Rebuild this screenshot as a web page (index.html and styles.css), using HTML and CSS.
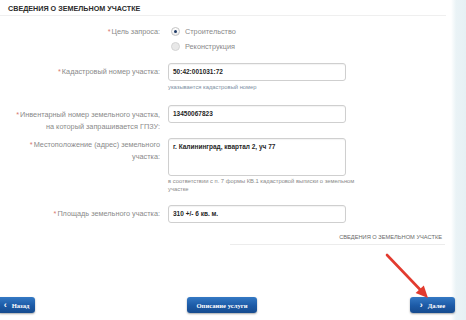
FILE: index.html
```html
<!DOCTYPE html>
<html lang="ru">
<head>
<meta charset="utf-8">
<link rel="stylesheet" href="styles.css">
</head>
<body>
<div class="page">
  <h1 class="title">Сведения о земельном участке</h1>
  <div class="form">
    <div class="row row-radio">
      <div class="lbl"><span class="req">*</span>Цель запроса:</div>
      <div class="field radios">
        <div class="opt"><span class="radio on"></span>Строительство</div>
        <div class="opt"><span class="radio"></span>Реконструкция</div>
      </div>
    </div>
    <div class="row row-kad">
      <div class="lbl"><span class="req">*</span>Кадастровый номер участка:</div>
      <div class="field">
        <div class="input">50:42:001031:72</div>
        <div class="hint">указывается кадастровый номер</div>
      </div>
    </div>
    <div class="row row-inv">
      <div class="lbl lbl-multi"><span class="req">*</span>Инвентарный номер земельного участка,<br>на который запрашивается ГПЗУ:</div>
      <div class="field">
        <div class="input">13450067823</div>
      </div>
    </div>
    <div class="row row-addr">
      <div class="lbl lbl-multi lbl-addr"><span class="req">*</span>Местоположение (адрес) земельного<br>участка:</div>
      <div class="field">
        <div class="input textarea">г. Калининград, квартал 2, уч 77</div>
        <div class="hint hint-wide">в соответствии с п. 7 формы КВ.1 кадастровой выписки о земельном участке</div>
      </div>
    </div>
    <div class="row row-area">
      <div class="lbl"><span class="req">*</span>Площадь земельного участка:</div>
      <div class="field">
        <div class="input">310 +/- 6 кв. м.</div>
      </div>
    </div>
  </div>
  <div class="section-foot">Сведения о земельном участке</div>
  <div class="buttons">
    <a class="btn btn-back"><span class="chev">‹</span>Назад</a>
    <a class="btn btn-desc">Описание услуги</a>
    <a class="btn btn-next"><span class="chev">›</span>Далее</a>
  </div>
  <svg class="arrow" width="466" height="320" viewBox="0 0 466 320">
    <line x1="387" y1="255" x2="420" y2="289.5" stroke="#e23b2f" stroke-width="2.6" stroke-linecap="round"/>
    <polygon points="428,298 415.6,292.9 423.8,285.4" fill="#e23b2f"/>
  </svg>
</div>
</body>
</html>
```
FILE: styles.css
```css
html, body {
  margin: 0;
  padding: 0;
}
body {
  width: 466px;
  height: 320px;
  overflow: hidden;
  background: linear-gradient(to right, #ffffff 0, #ffffff 451px, #eaf3f6 456px, #e6f0f4 466px);
  font-family: "Liberation Sans", Arial, sans-serif;
  color: #888;
}
.page {
  position: relative;
  width: 466px;
  height: 320px;
}
.title {
  margin: 0;
  width: 438px;
  padding: 4px 0 1px 8px;
  font-size: 7.2px;
  line-height: 10px;
  font-weight: bold;
  text-transform: uppercase;
  color: #2b2b2b;
  border-bottom: 1px solid #efefef;
}
.form {
  display: flex;
  flex-direction: column;
}
.row {
  display: grid;
  grid-template-columns: 160px 190px;
  column-gap: 8px;
}
.lbl {
  text-align: right;
  font-size: 7.3px;
  line-height: 18px;
  color: #8a8a8a;
}
.req {
  color: #d8776e;
  margin-right: 1px;
}
.lbl-multi {
  line-height: 12px;
  padding-top: 4px;
}
.lbl-addr {
  padding-top: 1px;
}
.row-radio {
  margin-top: 8px;
}
.row-radio .lbl {
  line-height: 15px;
}
.radios {
  display: flex;
  flex-direction: column;
}
.opt {
  display: flex;
  align-items: center;
  height: 15px;
  font-size: 7.3px;
  color: #8a8a8a;
  padding-left: 3px;
}
.radio {
  width: 7px;
  height: 7px;
  border-radius: 50%;
  border: 1px solid #d4d4d4;
  background: #e8e8e8;
  margin-right: 5px;
  display: flex;
  align-items: center;
  justify-content: center;
  box-sizing: content-box;
}
.radio.on {
  background: linear-gradient(#ffffff, #ececec);
  border-color: #c4c4c4;
}
.radio.on::after {
  content: "";
  width: 3px;
  height: 3px;
  border-radius: 50%;
  background: #1d3a66;
}
.row-kad {
  margin-top: 9px;
}
.row-inv {
  margin-top: 14px;
}
.row-addr {
  margin-top: 5px;
}
.row-area {
  margin-top: 12px;
}
.input {
  box-sizing: border-box;
  width: 178px;
  height: 18px;
  border: 1px solid #cfcfcf;
  border-radius: 3px;
  background: #fff;
  box-shadow: inset 0 1px 1px rgba(0,0,0,0.05);
  padding-left: 4px;
  font-size: 6.5px;
  line-height: 16px;
  font-weight: bold;
  color: #1f1f1f;
}
.textarea {
  height: 38px;
  line-height: 14px;
  padding-top: 1px;
}
.hint {
  margin-top: 2px;
  font-size: 5.8px;
  line-height: 8px;
  color: #7d8fa3;
}
.hint-wide {
  margin-top: 1px;
  width: 190px;
  color: #8a8a8a;
}
.section-foot {
  margin: 10px 0 0 230px;
  width: 212px;
  padding: 0 3px 3px 0;
  text-align: right;
  font-size: 5.7px;
  line-height: 8px;
  text-transform: uppercase;
  color: #6a6a6a;
  border-bottom: 1px solid #ececec;
}
.buttons {
  display: flex;
  margin-top: 52px;
  padding-right: 11px;
}
.btn {
  box-sizing: border-box;
  height: 16px;
  display: flex;
  align-items: center;
  justify-content: center;
  border-radius: 3px;
  background: linear-gradient(#3479c4, #1c5aa6 55%, #174b8e);
  box-shadow: 0 1px 2px rgba(0,0,0,0.35);
  color: #fff;
  font-size: 6.6px;
  font-weight: bold;
  font-family: "Liberation Serif", "Times New Roman", serif;
}
.chev {
  font-family: "Liberation Sans", Arial, sans-serif;
  font-size: 9px;
  margin-right: 5px;
  line-height: 1;
}
.btn-back {
  width: 37px;
  margin-left: -2px;
}
.btn-desc {
  width: 70px;
  margin-left: 152px;
}
.btn-next {
  width: 45px;
  margin-left: auto;
}
.arrow {
  position: absolute;
  left: 0;
  top: 0;
  pointer-events: none;
}
```
